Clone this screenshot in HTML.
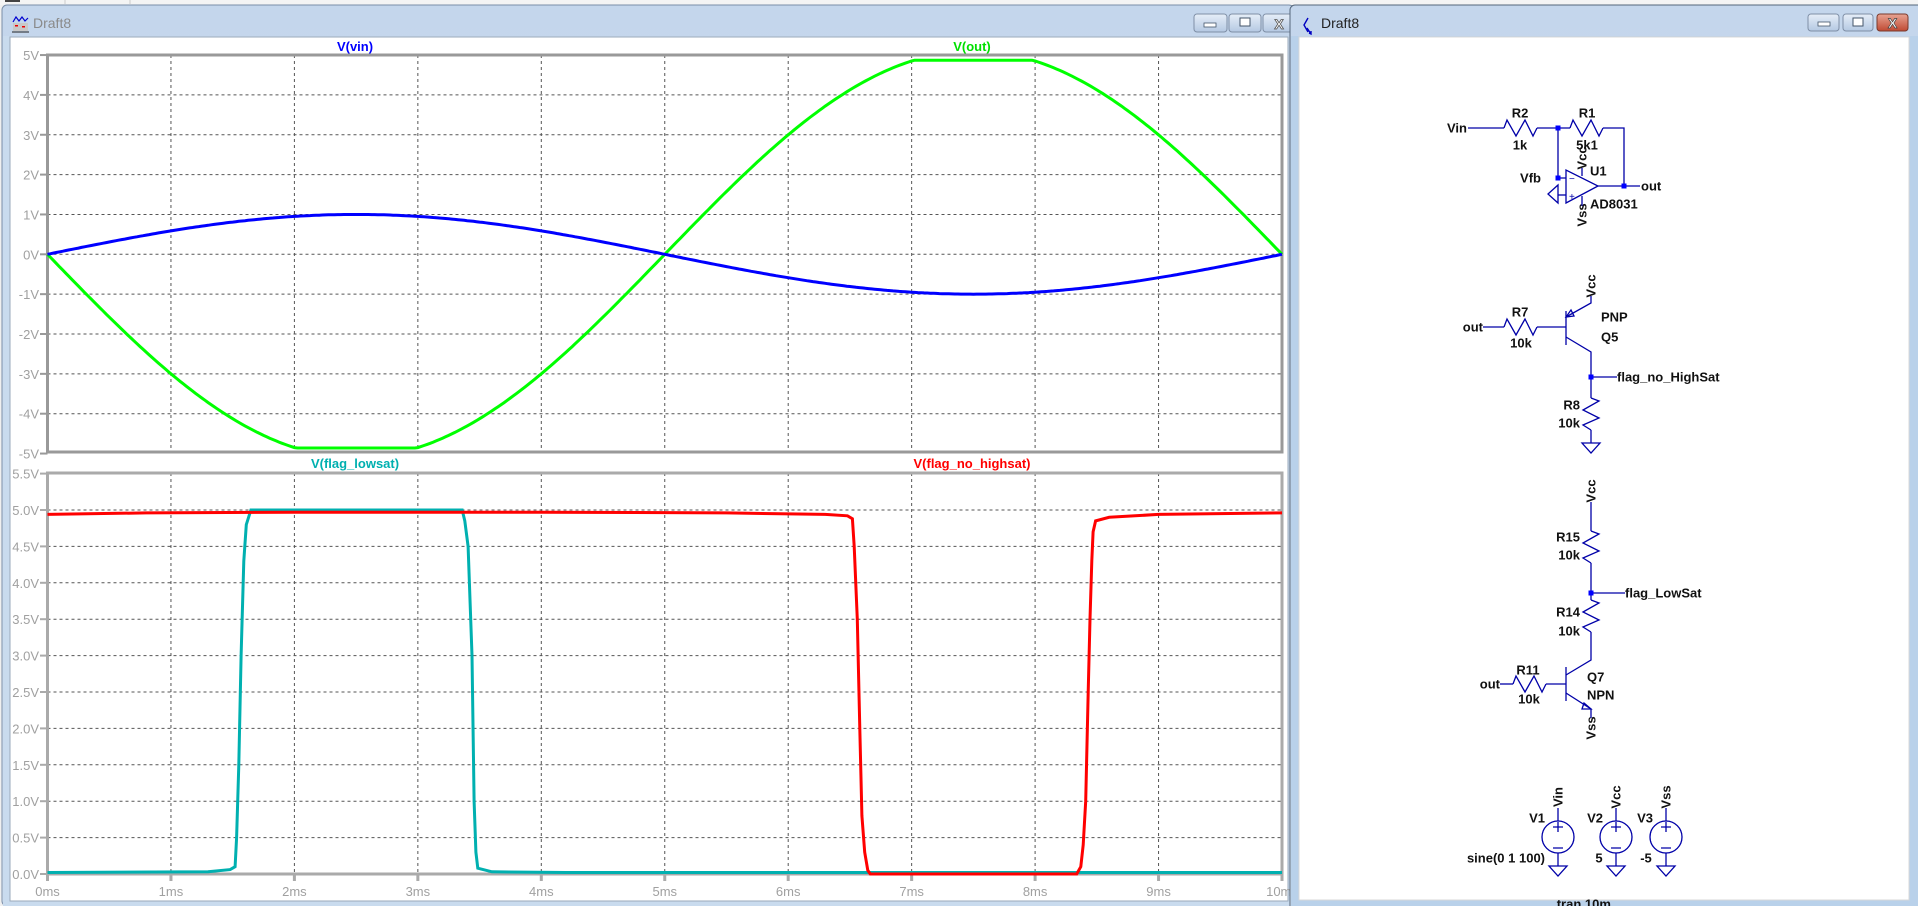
<!DOCTYPE html>
<html><head><meta charset="utf-8">
<style>
html,body{margin:0;padding:0;width:1918px;height:906px;overflow:hidden;background:#f0f0f0}
svg{display:block}
.ax{font-family:"Liberation Sans",sans-serif;font-size:13px;fill:#a0a0a0}
.sc{font-family:"Liberation Sans",sans-serif;font-size:13px;font-weight:bold;fill:#111}
.tt{font-family:"Liberation Sans",sans-serif;font-size:13px;font-weight:bold}
</style></head><body>
<svg id="s" width="1918" height="906" viewBox="0 0 1918 906" xmlns="http://www.w3.org/2000/svg">
<defs>
<linearGradient id="tb" x1="0" y1="0" x2="0" y2="1"><stop offset="0" stop-color="#c4d6ec"/><stop offset="1" stop-color="#d9e6f4"/></linearGradient>
<linearGradient id="bt" x1="0" y1="0" x2="0" y2="1"><stop offset="0" stop-color="#e6eef8"/><stop offset="1" stop-color="#b4c8e2"/></linearGradient>
<linearGradient id="cl" x1="0" y1="0" x2="0" y2="1"><stop offset="0" stop-color="#e8a493"/><stop offset="1" stop-color="#c04a33"/></linearGradient>
</defs>
<!-- top strip -->
<rect x="0" y="0" width="1918" height="5" fill="#f4f4f4"/>
<line x1="65" y1="0" x2="65" y2="4" stroke="#ccc"/><line x1="130" y1="0" x2="130" y2="4" stroke="#ccc"/>
<rect x="5" y="0" width="15" height="2" fill="#444"/>
<!-- left window -->
<rect x="2" y="5" width="1292" height="901" rx="5" fill="url(#tb)" stroke="#7a8ea8"/>
<rect x="3" y="36" width="1290" height="870" fill="#c9dbee"/>
<rect x="10" y="37" width="1278" height="864" fill="#fff" stroke="#9aaabb"/>
<g transform="translate(12,15)">
<path d="M1 7 L4 2 L7 6 L10 2 L13 6 L16 3" fill="none" stroke="#0000d0" stroke-width="1.2"/>
<rect x="1" y="8" width="15" height="8" fill="#c8c8c8"/>
<rect x="3" y="10" width="3" height="1.5" fill="#e00"/><rect x="10" y="11" width="3" height="1.5" fill="#e00"/>
<line x1="0" y1="17" x2="17" y2="17" stroke="#222"/>
</g>
<text x="33" y="28" font-family="Liberation Sans,sans-serif" font-size="14" fill="#8a8a8a">Draft8</text>
<g>
<rect x="1194" y="14" width="33" height="18" rx="3" fill="url(#bt)" stroke="#7f8fa6"/>
<rect x="1204" y="23" width="12" height="4" fill="#fff" stroke="#44556a" stroke-width="0.8"/>
<rect x="1229" y="14" width="32" height="18" rx="3" fill="url(#bt)" stroke="#7f8fa6"/>
<rect x="1240" y="18" width="10" height="8" fill="#fff" stroke="#44556a" stroke-width="1"/>
<rect x="1263" y="14" width="30" height="18" rx="3" fill="url(#bt)" stroke="#7f8fa6"/>
<text x="1279" y="29" text-anchor="middle" font-family="Liberation Sans,sans-serif" font-size="14" font-weight="bold" fill="#fff" stroke="#555" stroke-width="0.8">X</text>
</g>
<g id="plots"></g>
<!-- right window -->
<rect x="1290" y="5" width="640" height="910" rx="5" fill="url(#tb)" stroke="#55667a"/>
<rect x="1291" y="36" width="627" height="870" fill="#b9d1ea"/>
<rect x="1299" y="37" width="610" height="863" fill="#fff" stroke="#d8d8d8"/>
<g transform="translate(1302,16)" stroke="#0000c0" fill="none" stroke-width="1.4">
<path d="M6 2 L2 9 L6 16"/><path d="M5 12 L9 18" /><path d="M7 17 L9 18 L9 15"/>
</g>
<text x="1321" y="28" font-family="Liberation Sans,sans-serif" font-size="14" fill="#222">Draft8</text>
<rect x="1808" y="14" width="31" height="17" rx="3" fill="url(#bt)" stroke="#7f8fa6"/>
<rect x="1818" y="22" width="12" height="4" fill="#fff" stroke="#44556a" stroke-width="0.8"/>
<rect x="1843" y="14" width="30" height="17" rx="3" fill="url(#bt)" stroke="#7f8fa6"/>
<rect x="1853" y="18" width="10" height="8" fill="#fff" stroke="#44556a" stroke-width="1"/>
<rect x="1877" y="14" width="31" height="17" rx="3" fill="url(#cl)" stroke="#7a3a2c"/>
<text x="1892.5" y="28" text-anchor="middle" font-family="Liberation Sans,sans-serif" font-size="14" font-weight="bold" fill="#fff" stroke="#444" stroke-width="0.7">X</text>
<g id="sch" stroke="#0000a8" stroke-width="1.3" fill="none"></g>
<g id="schj" fill="#0000ff"></g>
<g id="scht"></g>
</svg>
<script>
var NS="http://www.w3.org/2000/svg";
function el(p,t,a,txt){var e=document.createElementNS(NS,t);for(var k in a)e.setAttribute(k,a[k]);if(txt!=null)e.textContent=txt;p.appendChild(e);return e;}
var P=document.getElementById("plots");
var X0=47.5,XS=123.45,XR=1282;
function X(t){return X0+XS*t;}
function YU(v){return 254.3-39.85*v;}
function YL(v){return 874-72.8*v;}
// grids
for(var i=1;i<10;i++){var x=X(i);
 el(P,"line",{x1:x,y1:55,x2:x,y2:452,stroke:"#555","stroke-dasharray":"3,3","stroke-width":1});
 el(P,"line",{x1:x,y1:473,x2:x,y2:874,stroke:"#555","stroke-dasharray":"3,3","stroke-width":1});}
for(var v=-4;v<=4;v++){var y=YU(v);el(P,"line",{x1:X0,y1:y,x2:XR,y2:y,stroke:"#555","stroke-dasharray":"3,3","stroke-width":1});}
for(var k=1;k<=10;k++){var y=YL(k*0.5);el(P,"line",{x1:X0,y1:y,x2:XR,y2:y,stroke:"#555","stroke-dasharray":"3,3","stroke-width":1});}
// frames
el(P,"rect",{x:X0,y:55,width:XR-X0,height:397,fill:"none",stroke:"#999","stroke-width":3});
el(P,"rect",{x:X0,y:473,width:XR-X0,height:401,fill:"none",stroke:"#aaa","stroke-width":3});
// axis labels
for(var v=5;v>=-5;v--){var y=YU(v);el(P,"line",{x1:40,y1:y,x2:X0,y2:y,stroke:"#999","stroke-width":2});
 el(P,"text",{x:39,y:y+5,"text-anchor":"end","class":"ax"},v+"V");}
for(var k=11;k>=0;k--){var y=YL(k*0.5);el(P,"line",{x1:40,y1:y,x2:X0,y2:y,stroke:"#aaa","stroke-width":2});
 el(P,"text",{x:39,y:y+5,"text-anchor":"end","class":"ax"},(k*0.5).toFixed(1)+"V");}
for(var i=0;i<=10;i++){var x=X(i);el(P,"line",{x1:x,y1:874,x2:x,y2:881,stroke:"#aaa","stroke-width":3});
 el(P,"text",{x:x,y:896,"text-anchor":"middle","class":"ax"},i+"ms");}
// titles
el(P,"text",{x:355,y:51,"text-anchor":"middle","class":"tt",fill:"#0000ff"},"V(vin)");
el(P,"text",{x:972,y:51,"text-anchor":"middle","class":"tt",fill:"#00e000"},"V(out)");
el(P,"text",{x:355,y:468,"text-anchor":"middle","class":"tt",fill:"#00b0b0"},"V(flag_lowsat)");
el(P,"text",{x:972,y:468,"text-anchor":"middle","class":"tt",fill:"#ff0000"},"V(flag_no_highsat)");
// traces
var vin=[],out=[];
for(var j=0;j<=400;j++){var t=j*10/400,s=Math.sin(2*Math.PI*t/10);
 vin.push(X(t).toFixed(1)+","+YU(s).toFixed(1));
 var o=Math.max(-4.86,Math.min(4.87,-5.1*s));out.push(X(t).toFixed(1)+","+YU(o).toFixed(1));}
el(P,"polyline",{points:out.join(" "),fill:"none",stroke:"#00ff00","stroke-width":3});
el(P,"polyline",{points:vin.join(" "),fill:"none",stroke:"#0000ff","stroke-width":3});
function pl(arr,col){var pts=arr.map(function(p){return X(p[0]).toFixed(1)+","+YL(p[1]).toFixed(1)}).join(" ");
 el(P,"polyline",{points:pts,fill:"none",stroke:col,"stroke-width":3});}
pl([[0,0.02],[1.3,0.03],[1.48,0.06],[1.52,0.1],[1.532,0.5],[1.55,1.5],[1.568,3],[1.59,4.3],[1.61,4.8],[1.648,5.0],[3.359,5.0],[3.38,4.85],[3.407,4.5],[3.439,3],[3.456,1],[3.47,0.3],[3.486,0.08],[3.6,0.03],[4.2,0.02],[10,0.02]],"#00b0b0");
pl([[0,4.94],[0.8,4.96],[2,4.97],[4,4.97],[5.5,4.96],[6.3,4.94],[6.48,4.92],[6.52,4.88],[6.535,4.5],[6.56,3.5],[6.58,2],[6.597,0.8],[6.62,0.3],[6.645,0.05],[6.665,0],[8.337,0],[8.37,0.1],[8.39,0.4],[8.41,1],[8.43,2.5],[8.445,3.5],[8.459,4.3],[8.47,4.7],[8.49,4.85],[8.6,4.9],[9,4.94],[10,4.96]],"#ff0000");

// schematic
var S=document.getElementById("sch"),J=document.getElementById("schj"),T=document.getElementById("scht");
function L(d){el(S,"path",{d:d});}
function jn(x,y){el(J,"rect",{x:x-2.5,y:y-2.5,width:5,height:5});}
function tx(x,y,s,anc,rot){var a={x:x,y:y,"class":"sc","dominant-baseline":"central"};if(anc)a["text-anchor"]=anc;
 if(rot){a.transform="rotate(-90 "+x+" "+y+")";a["text-anchor"]="middle";}el(T,"text",a,s);}
function rh(x,y){L("M"+x+" "+y+" l3 -8 l9 16 l9 -16 l8 16 l4 -8");}
function rv(x,y){L("M"+x+" "+y+" l8 3 l-16 9 l16 8 l-16 7 l8 5");}
function gnd(x,y){L("M"+(x-9)+" "+y+" h18 l-9 10 z");}
// opamp section
L("M1468 128 H1504");rh(1504,128);L("M1537 128 H1570");rh(1570,128);L("M1603 128 H1624 V186");
L("M1558 128 V178 H1566");L("M1598 186 H1640");
L("M1566 170 V203 L1598 186 Z");
L("M1558 195 H1566");L("M1558 185 V203 L1548 194 Z");
L("M1582 168 V176");L("M1582 196 V206");
jn(1558,128);jn(1558,178);jn(1624,186);
el(T,"text",{x:1569,y:182,"font-family":"Liberation Sans,sans-serif","font-size":"10",fill:"#0000a8"},"−");
el(T,"text",{x:1569,y:200,"font-family":"Liberation Sans,sans-serif","font-size":"10",fill:"#0000a8"},"+");
tx(1467,128,"Vin","end");tx(1520,113,"R2","middle");tx(1520,145,"1k","middle");
tx(1587,113,"R1","middle");tx(1587,145,"5k1","middle");
tx(1541,178,"Vfb","end");tx(1641,186,"out");tx(1590,171,"U1");tx(1590,204,"AD8031");
tx(1582,158,"Vcc",null,true);tx(1582,215,"Vss",null,true);
// PNP
L("M1591 296 V303 L1566 317");L("M1571 310 l-5 7 l8 -1 z");
L("M1566 311 V345");L("M1483 327 H1504");rh(1504,327);L("M1537 327 H1566");
L("M1566 337 L1591 352 V398");rv(1591,398);L("M1591 430 V443");gnd(1591,443);
L("M1591 377 H1617");jn(1591,377);
tx(1591,286,"Vcc",null,true);tx(1483,327,"out","end");tx(1520,312,"R7","middle");tx(1521,343,"10k","middle");
tx(1601,317,"PNP");tx(1601,337,"Q5");tx(1617,377,"flag_no_HighSat");
tx(1580,405,"R8","end");tx(1580,423,"10k","end");
// R15/R14/NPN
tx(1591,491,"Vcc",null,true);
L("M1591 502 V531");rv(1591,531);L("M1591 563 V600");rv(1591,600);L("M1591 632 V660 L1566 675");
L("M1591 593 H1625");jn(1591,593);
tx(1580,537,"R15","end");tx(1580,555,"10k","end");tx(1625,593,"flag_LowSat");
tx(1580,612,"R14","end");tx(1580,631,"10k","end");
L("M1566 667 V701");L("M1500 684 H1513");rh(1513,684);L("M1546 684 H1566");
L("M1566 693 L1591 709 V718");L("M1591 709 l-9 0 l2 -6 z");
tx(1500,684,"out","end");tx(1528,670,"R11","middle");tx(1529,699,"10k","middle");
tx(1587,677,"Q7");tx(1587,695,"NPN");tx(1591,728,"Vss",null,true);
// sources
[[1558,"Vin","V1","sine(0 1 100)"],[1616,"Vcc","V2","5"],[1666,"Vss","V3","-5"]].forEach(function(s){var x=s[0];
 L("M"+x+" 808 V821");el(S,"circle",{cx:x,cy:837,r:16});L("M"+x+" 853 V866");gnd(x,866);
 L("M"+(x-5)+" 827 h10 M"+x+" 822 v10 M"+(x-5)+" 848 h10");
 tx(x,797,s[1],null,true);tx(x-13,818,s[2],"end");});
tx(1545,858,"sine(0 1 100)","end");tx(1599,858,"5","middle");tx(1646,858,"-5","middle");
tx(1582,904,".tran 10m","middle");
</script>
</body></html>
